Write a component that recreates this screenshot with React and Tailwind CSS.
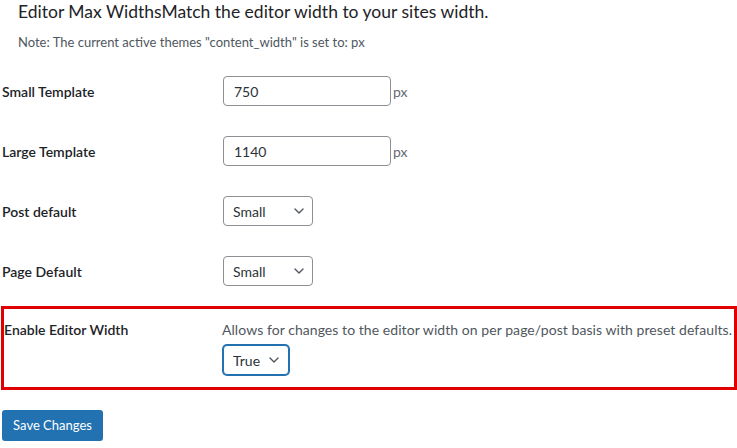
import React from "react";

function Chevron({ className = "" }) {
  return (
    <svg width="10" height="6" viewBox="0 0 10 6" className={className} fill="none">
      <path d="M1 1l4 4 4-4" stroke="#50575e" strokeWidth="1.4" strokeLinecap="round" strokeLinejoin="round" />
    </svg>
  );
}

function Select({ value, w = "w-[90px]", focus = false, pr = "pr-[9px]" }) {
  return (
    <div
      className={`${w} ${pr} h-[30px] flex items-center justify-between pl-[9px] bg-white rounded-[4px] text-[14px] text-[#2c3338] ${
        focus ? "border border-[#2271b1] shadow-[0_0_0_1px_#2271b1]" : "border border-[#8c8f94]"
      }`}
    >
      <span>{value}</span>
      <Chevron />
    </div>
  );
}

function TextInput({ value }) {
  return (
    <div className="flex items-center">
      <div className="w-[168px] h-[30px] flex items-center px-[10px] border border-[#8c8f94] rounded-[4px] bg-white text-[14px] text-[#2c3338]">
        {value}
      </div>
      <span className="ml-[2px] text-[14px] text-[#646970]">px</span>
    </div>
  );
}

function Row({ label, children }) {
  return (
    <div className="h-[60px] flex items-center">
      <div className="w-[223px] pl-[2px] font-semibold text-[14px] text-[#1d2327]">{label}</div>
      <div>{children}</div>
    </div>
  );
}

export default function App() {
  return (
    <div
      className="w-[737px] h-[448px] bg-white text-[#1d2327] overflow-hidden"
      style={{ fontFamily: "Lato, 'Noto Sans', sans-serif" }}
    >
      <h2 className="pl-[18px] pt-[1px] text-[17.5px] leading-[22px] font-normal text-[#1d2327]">
        Editor Max WidthsMatch the editor width to your sites width.
      </h2>
      <p className="pl-[18px] mt-[11px] text-[13px] leading-[17px] text-[#50575e]">
        Note: The current active themes "content_width" is set to: px
      </p>
      <div className="mt-[10px]">
        <Row label="Small Template">
          <TextInput value="750" />
        </Row>
        <Row label="Large Template">
          <TextInput value="1140" />
        </Row>
        <Row label="Post default">
          <Select value="Small" pr="pr-[8px]" />
        </Row>
        <Row label="Page Default">
          <Select value="Small" pr="pr-[8px]" />
        </Row>
      </div>
      <div className="mt-[5px] ml-[1px] w-[736px] h-[84px] border-[3px] border-[#e00000] flex pt-[12px]">
        <div className="w-[218px] font-semibold text-[14px] leading-[18px] text-[#1d2327]">Enable Editor Width</div>
        <div className="flex flex-col">
          <p className="text-[14px] leading-[18px] text-[#50575e] tracking-[0.06px]">
            Allows for changes to the editor width on per page/post basis with preset defaults.
          </p>
          <div className="mt-[6px] ml-[1px]">
            <Select value="True" w="w-[66px]" focus />
          </div>
        </div>
      </div>
      <button className="mt-[20px] ml-[2px] w-[101px] h-[31px] rounded-[3px] bg-[#2271b1] text-white text-[13px] flex items-center justify-center">
        Save Changes
      </button>
    </div>
  );
}
